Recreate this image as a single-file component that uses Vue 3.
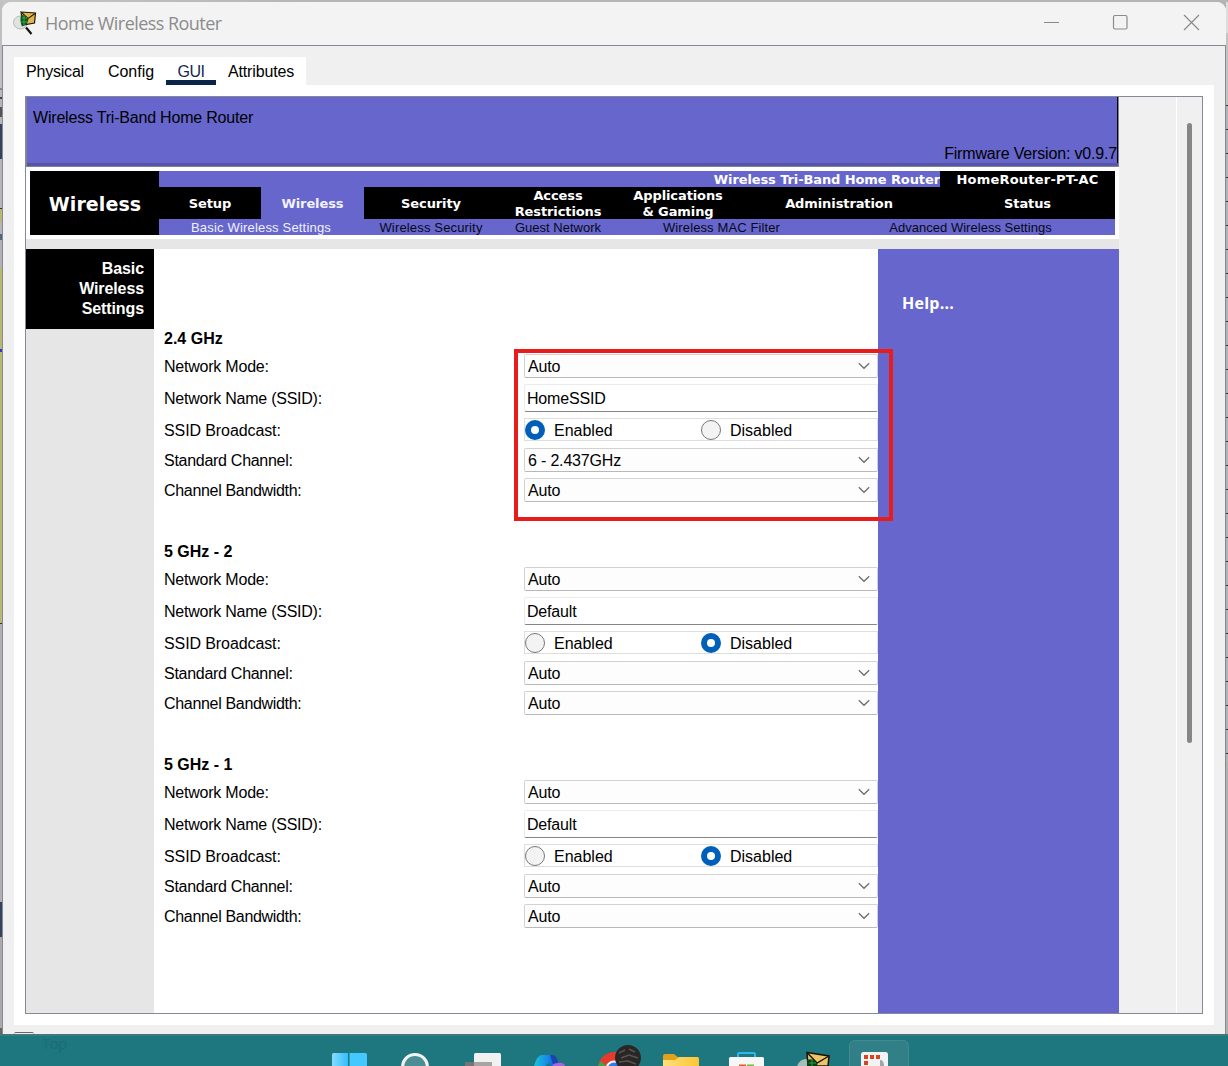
<script setup>
const tabs = [
  { name: 'Physical', width: 82, spacing: -0.22 },
  { name: 'Config', width: 70, spacing: 0 },
  { name: 'GUI', width: 50, spacing: -0.4 },
  { name: 'Attributes', width: 90, spacing: -0.15 }
]
const menu = [
  { lines: ['Setup'], width: 102 },
  { lines: ['Wireless'], width: 103, active: true },
  { lines: ['Security'], width: 134 },
  { lines: ['Access', 'Restrictions'], width: 120 },
  { lines: ['Applications', '& Gaming'], width: 120 },
  { lines: ['Administration'], width: 202 },
  { lines: ['Status'], width: 175 }
]
const submenu = [
  { name: 'Basic Wireless Settings', width: 204, spacing: 0.18, active: true },
  { name: 'Wireless Security', width: 136, spacing: 0.16 },
  { name: 'Guest Network', width: 118, spacing: 0 },
  { name: 'Wireless MAC Filter', width: 209, spacing: 0.12 },
  { name: 'Advanced Wireless Settings', width: 289, spacing: 0.02 }
]
const bands = [
  { title: '2.4 GHz', mode: 'Auto', ssid: 'HomeSSID', broadcast: true, channel: '6 - 2.437GHz', bandwidth: 'Auto', marked: true },
  { title: '5 GHz - 2', mode: 'Auto', ssid: 'Default', broadcast: false, channel: 'Auto', bandwidth: 'Auto' },
  { title: '5 GHz - 1', mode: 'Auto', ssid: 'Default', broadcast: false, channel: 'Auto', bandwidth: 'Auto' }
]
const rowsOf = (b) => [
  { label: 'Network Mode:', spacing: -0.22, kind: 'select', value: b.mode },
  { label: 'Network Name (SSID):', spacing: -0.24, kind: 'input', value: b.ssid },
  { label: 'SSID Broadcast:', spacing: -0.1, kind: 'radio', value: b.broadcast },
  { label: 'Standard Channel:', spacing: -0.28, kind: 'select', value: b.channel },
  { label: 'Channel Bandwidth:', spacing: -0.32, kind: 'select', value: b.bandwidth }
]
</script>

<template>
  <div class="desktop">
    <div class="window-row">
      <div class="edge left"></div>
      <div class="window">
        <header class="titlebar">
          <svg class="app-icon" width="24" height="24" viewBox="0 0 24 24">
            <ellipse cx="7.5" cy="11.5" rx="7" ry="6.5" fill="#dfe3e0" stroke="#b5bab7" />
            <path d="M8 1L22.500 2L21.500 12L10 14Z" fill="#e4b450" stroke="#211806" stroke-width="1.200" />
            <path d="M8.500 1.500L15 7.500L22 2.500" fill="none" stroke="#33240a" stroke-width="1.100" />
            <path d="M8 4Q13 4 15.500 8L14 13L9 15.500Q6.500 10 8 4Z" fill="#12531d" />
            <path d="M9 7H14M8 11H14.500M11 4.500V14" stroke="#2fae43" />
            <path d="M13 16.500L18.500 23" stroke="#151515" stroke-width="2.200" />
          </svg>
          <span class="title">Home Wireless Router</span>
          <svg class="win-buttons" width="160" height="20" viewBox="0 0 160 20" fill="none" stroke="#8a8a8a" stroke-width="1.200">
            <path d="M4 9.500H19" />
            <rect x="73.500" y="2.500" width="13.500" height="13.500" rx="1.500" />
            <path d="M144 2L159 17M159 2L144 17" />
          </svg>
        </header>

        <div class="client">
          <nav class="tabs">
            <div v-for="t in tabs" :key="t.name" class="tab" :class="{ current: t.name === 'GUI' }" :style="{ width: t.width + 'px', letterSpacing: t.spacing + 'px' }">{{ t.name }}</div>
          </nav>
          <div class="panel">
            <div class="frame">
              <div class="page">
                <div class="banner">
                  <div class="banner-in">
                    <div class="product">Wireless Tri-Band Home Router</div>
                    <div class="firmware">Firmware Version: v0.9.7</div>
                  </div>
                </div>
                <div class="nav">
                  <div class="section">Wireless</div>
                  <div class="nav-rows">
                    <div class="model-row">
                      <div class="model-name"><span>Wireless Tri-Band Home Router</span></div>
                      <div class="model-id">HomeRouter-PT-AC</div>
                    </div>
                    <div class="menu">
                      <div v-for="m in menu" :key="m.lines[0]" class="menu-item" :class="{ active: m.active }" :style="{ width: m.width + 'px' }">
                        <span v-for="l in m.lines" :key="l">{{ l }}</span>
                      </div>
                    </div>
                    <div class="submenu">
                      <div v-for="s in submenu" :key="s.name" :class="{ active: s.active }" :style="{ width: s.width + 'px', letterSpacing: s.spacing + 'px' }">{{ s.name }}</div>
                    </div>
                  </div>
                </div>
                <div class="body">
                  <aside class="side"><div class="side-title">Basic<br>Wireless<br>Settings</div></aside>
                  <main class="form">
                    <section v-for="b in bands" :key="b.title" class="band">
                      <h3>{{ b.title }}</h3>
                      <div class="rows">
                        <div v-for="r in rowsOf(b)" :key="r.label" class="row" :class="r.kind">
                          <label :style="{ letterSpacing: r.spacing + 'px' }">{{ r.label }}</label>
                          <div class="control">
                            <template v-if="r.kind === 'radio'">
                              <div class="option"><i :class="{ on: r.value }"></i><span>Enabled</span></div>
                              <div class="option"><i :class="{ on: !r.value }"></i><span>Disabled</span></div>
                            </template>
                            <template v-else>
                              <span class="value">{{ r.value }}</span>
                              <svg v-if="r.kind === 'select'" width="12" height="8" viewBox="0 0 12 8" fill="none" stroke="#6a6a6a" stroke-width="1.200"><path d="M0.800 1.300L6 6.300L11.200 1.300" /></svg>
                            </template>
                          </div>
                        </div>
                        <div v-if="b.marked" class="marker"></div>
                      </div>
                    </section>
                  </main>
                  <aside class="help">Help...</aside>
                </div>
              </div>
              <div class="scroll"><div class="thumb"></div></div>
            </div>
          </div>
          <div class="status"><div class="check"></div></div>
        </div>
      </div>
      <div class="edge right"></div>
    </div>

    <footer class="taskbar">
      <span class="ghost">Top</span>
      <svg width="1228" height="32" viewBox="0 0 1228 32">
        <defs>
          <linearGradient id="win" x1="0" x2="1"><stop offset="0" stop-color="#83dcff" /><stop offset="1" stop-color="#35bdfb" /></linearGradient>
          <linearGradient id="cop" x1="0" x2="1"><stop offset="0" stop-color="#19c4dc" /><stop offset=".55" stop-color="#1689e8" /><stop offset="1" stop-color="#1642b8" /></linearGradient>
          <linearGradient id="fold" x1="0" x2="1"><stop offset="0" stop-color="#ffe07a" /><stop offset="1" stop-color="#fbc634" /></linearGradient>
        </defs>
        <path d="M332 32V20.500Q332 19 333.500 19H348V32Z" fill="url(#win)" />
        <path d="M349.500 32V19H365.500Q367 19 367 20.500V32Z" fill="#43c8ff" />
        <circle cx="415" cy="33" r="12.500" fill="#4b8f95" stroke="#f2f4f4" stroke-width="3" />
        <rect x="474" y="19" width="27" height="20" rx="1.500" fill="#f1f1f1" />
        <rect x="465" y="28" width="27" height="10" rx="1" fill="#7d7574" opacity=".9" />
        <rect x="474" y="28" width="18" height="10" fill="#a7a4a3" />
        <path d="M534 32Q537 21 542 21H553Q557 22 559 32H552L549 29L545 32Z" fill="url(#cop)" />
        <path d="M550 21H553Q557 22 558 29L553 30Z" fill="#1744b5" />
        <path d="M552 32Q554 29 558 29H562Q565 30 565 32Z" fill="#b45fe2" />
        <circle cx="614" cy="34" r="16" fill="#e33b2e" />
        <path d="M598 32L601 27L606 32Z" fill="#35a853" />
        <circle cx="614" cy="35" r="8.500" fill="#fff" />
        <circle cx="614" cy="35" r="6.500" fill="#3577e5" />
        <circle cx="628" cy="24" r="13" fill="#292625" />
        <path d="M619 19L625 16M621 24L629 21L638 24M619 28L628 27L636 30M629 15L635 18" stroke="#575350" stroke-width="1.600" fill="none" />
        <path d="M663 32V22Q663 20 665 20H674L679 24V28H663Z" fill="#e0a21a" />
        <path d="M663 32V26H675L679 23H697.500Q699 23 699 24.500V32Z" fill="url(#fold)" />
        <path d="M738 23V20Q738 19 739 19H754Q755 19 755 20V23" fill="none" stroke="#2cb7ee" stroke-width="2" />
        <path d="M729 32V24.500Q729 23 730.500 23H762.500Q764 23 764 24.500V32Z" fill="#f6f7f7" />
        <rect x="739" y="30.500" width="7" height="2" fill="#e7532f" />
        <rect x="747" y="30.500" width="7" height="2" fill="#7db832" />
        <path d="M797 32Q800 25 806 25H813V32Z" fill="#a7bdba" />
        <path d="M807 18.500L829 22L828 32H808Z" fill="#edc566" stroke="#17130a" stroke-width="1.500" />
        <path d="M807 18.500L817 29L829 22" fill="none" stroke="#17130a" stroke-width="1.400" />
        <path d="M807 26Q815 23 818 32H807Z" fill="#0b3f14" />
        <path d="M809 29H816M812 26V32" stroke="#20a638" />
        <rect x="849.500" y="6.500" width="59" height="40" rx="5" fill="#317f87" stroke="#418b91" />
        <path d="M861 32V20.500Q861 18 863.500 18H885.500Q888 18 888 20.500V32Z" fill="#f2f3f4" />
        <path d="M880 26H881Q884 27 884 32H880Z" fill="#9da4aa" />
        <path d="M864 21H868V25H864ZM870 21H874V25H870ZM876 21H880V25H876ZM864 27H868V31H864Z" fill="#d9431e" />
      </svg>
    </footer>
  </div>
</template>

<style>
body { margin: 0; overflow: hidden; }
</style>

<style scoped>
* { box-sizing: border-box; }
.desktop {
  width: 1228px; height: 1066px; display: flex; flex-direction: column; overflow: hidden;
  background: linear-gradient(90deg, #c4c4c4, #b5b5b5 320px, #b4b4b4);
  font-family: "Liberation Sans", Arial, sans-serif; font-size: 16px; color: #000;
}
.window-row { height: 1034px; padding-top: 2px; display: flex; }
.edge { width: 2px; flex: none; }
.edge.left {
  background: linear-gradient(#c0c0c0 0 86px, #888 86px 88px, #bababa 88px 95px, #444 95px 97px, #b5b5b5 97px 105px, #555 105px 115px, #b8b8b8 115px 122px, #35435f 122px 157px, #b5b5b5 157px 206px, #333 206px 207px, #b8b870 207px 220px, #b5b5b8 220px 232px, #50677f 232px 238px, #b5b0b8 238px 266px, #b8b870 266px 347px, #3838b8 347px 350px, #b8b870 350px 621px, #333 621px 622px, #b0b0b0 622px 900px, #35435f 900px 935px, #aaa 935px 1026px, #666 1026px);
}
.edge.right {
  background: linear-gradient(#ddd 0 31px, #c3c3c3 31px 103px, transparent 103px 760px, #b0b0b0 760px), repeating-linear-gradient(#333 0 1px, #b0b3b8 1px 24px);
  background-position: 0 0, 0 103px;
}
.window {
  width: 1224px; display: flex; flex-direction: column; background: #f0f0f0;
  border-radius: 9px 9px 0 0; overflow: hidden;
}
.titlebar { height: 43px; flex: none; background: #f3f3f3; display: flex; align-items: center; padding: 0 26px 2px 11px; }
.app-icon { flex: none; }
.title { margin-left: 8px; font: 18px "Open Sans", "Noto Sans", sans-serif; color: #8c8c8c; letter-spacing: -0.55px; }
.win-buttons { margin-left: auto; }
.client { flex: 1; border: 1px solid #858993; border-bottom: 0; padding: 11px 11px 0; display: flex; flex-direction: column; }
.tabs { display: flex; width: 292px; height: 28px; background: #fff; flex: none; }
.tab { text-align: center; line-height: 29px; height: 28px; white-space: nowrap; }
.tab.current { color: #14284f; border-bottom: 5px solid #0b2548; }
.panel { height: 940px; background: #fff; padding: 11px; flex: none; }
.frame { width: 1178px; height: 918px; border: 1px solid #858993; display: flex; background: #f0f0f0; }
.page { width: 1093px; display: flex; flex-direction: column; }
.banner { height: 70px; flex: none; border: 1px solid #80848e; border-top: 0; background: #5656a9; padding-bottom: 3px; }
.banner-in { height: 66px; background: #6666cc; border-right: 1px solid #000; padding: 11px 0 0 6px; display: flex; flex-direction: column; justify-content: space-between; }
.product { line-height: 19px; letter-spacing: -0.2px; }
.firmware { text-align: right; line-height: 19px; letter-spacing: -0.17px; }
.nav { height: 72px; flex: none; background: #fff; padding: 4px; display: flex; }
.section { width: 129px; background: #000; color: #fff; font: bold 19px/66px "DejaVu Sans", Verdana, sans-serif; letter-spacing: 0.1px; text-align: center; padding-left: 1px; }
.nav-rows { width: 956px; background: #6666cc; color: #fff; font: bold 13px/16px "DejaVu Sans", Verdana, sans-serif; letter-spacing: -0.1px; }
.model-row { display: flex; height: 16px; line-height: 18px; white-space: nowrap; }
.model-name { width: 781px; text-align: right; }
.model-id { width: 175px; text-align: center; background: #000; letter-spacing: 0.22px; }
.menu { display: flex; height: 32px; }
.menu-item { background: #000; display: flex; flex-direction: column; align-items: center; justify-content: center; padding-top: 2px; }
.menu-item.active { background: #6666cc; color: #f2f2ff; }
.submenu { display: flex; height: 16px; font: 13px/17px "Liberation Sans", Arial, sans-serif; color: #08081a; text-align: center; white-space: nowrap; }
.submenu .active { color: #f0f0ff; }
.body { flex: 1; display: flex; border-top: 10px solid #e6e6e6; }
.side { width: 128px; background: #e6e6e6; }
.side-title { height: 80px; background: #000; color: #fff; font-weight: bold; line-height: 20px; text-align: right; padding: 10px 10px 0 0; letter-spacing: -0.1px; }
.form { width: 724px; background: #fff; padding: 78px 0 0 10px; }
.band { height: 213px; }
h3 { margin: 0; font-size: 16px; line-height: 24px; height: 27px; }
.rows { display: flex; flex-direction: column; gap: 6px; position: relative; }
.row { display: flex; height: 24px; align-items: center; }
.row.input { height: 28px; }
label { width: 360px; line-height: 24px; padding-top: 2px; }
.control { width: 354px; height: 24px; display: flex; align-items: center; border: 1px solid #d2d2d2; border-bottom-color: #b9b9b9; border-radius: 2px; background: #fdfdfd; padding: 0 7px 0 3px; }
.value { padding-top: 2px; letter-spacing: -0.18px; }
.select .control { justify-content: space-between; }
.input .control { height: 28px; border-color: #ebebeb; border-bottom-color: #868686; background: #fff; padding-left: 2px; }
.radio .control { height: 23px; border-color: #dedede; border-radius: 0; background: #fff; padding: 0; align-self: flex-start; }
.option { width: 176px; height: 23px; display: flex; align-items: center; }
.option span { line-height: 21px; padding-top: 2px; }
.option i { width: 20px; height: 20px; border: 1px solid #777; border-radius: 50%; background: #f3f3f3; margin-right: 9px; }
.option i.on { border: 6px solid #005fb8; background: #fff; }
.marker { position: absolute; left: 350px; top: -5px; width: 379px; height: 172px; border: 4px solid #e91c1c; z-index: 2; }
.help { width: 241px; background: #6666cc; color: #fff; font: bold 16px/20px "Open Sans", "Noto Sans", sans-serif; letter-spacing: 0.25px; padding: 44px 0 0 24px; }
.scroll { width: 26px; margin-left: auto; border-left: 1px solid #fff; padding: 26px 0 0 10px; }
.thumb { width: 5px; height: 620px; border-radius: 3px; background: #868686; }
.status { flex: 1; padding-top: 7px; }
.check { width: 20px; height: 2px; border-top: 1px solid #666; border-radius: 4px 4px 0 0; }
.taskbar { height: 32px; background: #1e767e; border-top: 2px solid #43777c; position: relative; }
.taskbar svg { position: absolute; left: 0; top: -2px; }
.ghost { position: absolute; left: 42px; top: -5px; font: 15px/24px "Open Sans", sans-serif; letter-spacing: -0.5px; color: #1a6c74; }
</style>
